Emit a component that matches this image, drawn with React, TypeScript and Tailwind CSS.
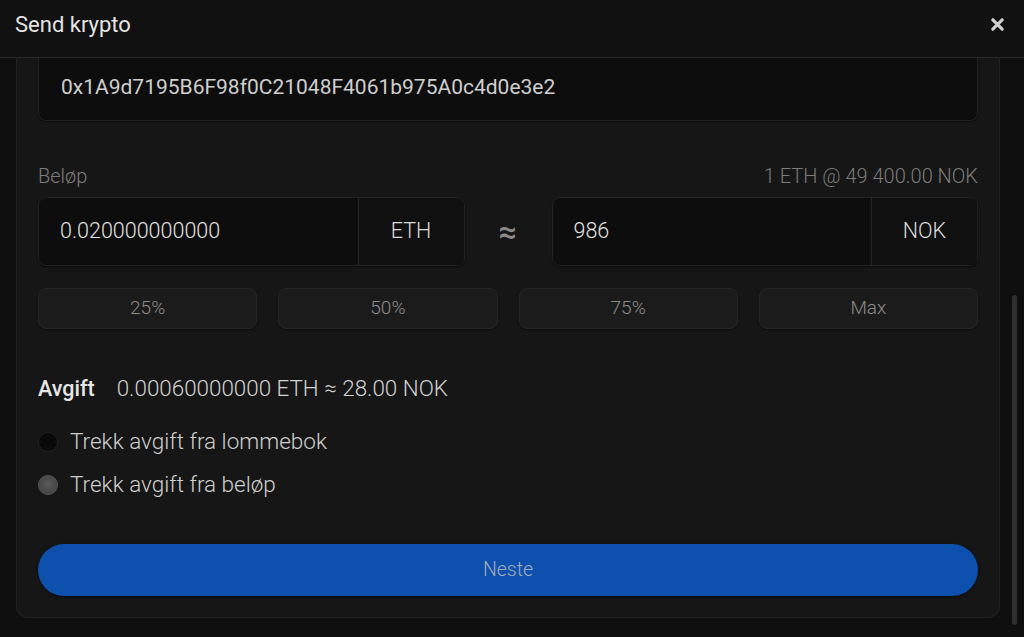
const font = { fontFamily: "Roboto, 'Noto Sans', sans-serif" };

function Radio({ checked, label }: { checked: boolean; label: string }) {
  return (
    <label className="flex h-[24px] items-center gap-3">
      <span
        className={[
          "h-[20px] w-[20px] shrink-0 rounded-full border",
          checked
            ? "border-[#555] bg-[radial-gradient(circle_at_50%_45%,#5a5a5a,#3c3c3c)]"
            : "border-[#222] bg-[#090909]",
        ].join(" ")}
      />
      <span className="text-[22.5px] font-light text-[#cfcfcf]">{label}</span>
    </label>
  );
}

function AmountInput({ value, unit }: { value: string; unit: string }) {
  return (
    <div className="flex h-[69px] overflow-hidden rounded-lg border border-[#222] bg-[#0d0d0d] shadow-[0_1px_2px_rgba(0,0,0,0.6)]">
      <div className="flex flex-1 items-center pl-[21px] text-[21.5px] font-light text-[#e2e2e2]">
        {value}
      </div>
      <div className="flex w-[106px] items-center justify-center border-l border-[#262626] bg-[#101010] text-[21.5px] font-light text-[#dcdcdc]">
        {unit}
      </div>
    </div>
  );
}

export default function App() {
  const percents = ["25%", "50%", "75%", "Max"];

  return (
    <div
      className="flex h-[637px] w-[1024px] flex-col overflow-hidden bg-[#0f0f0f]"
      style={font}
    >
      <header className="flex h-[58px] shrink-0 items-center justify-between border-b border-[#2a2a2a] bg-[#111111] pb-[8px] pl-[15px] pr-[19px]">
        <h1 className="text-[22px] text-[#e4e4e4]">Send krypto</h1>
        <svg viewBox="0 0 16 16" className="h-[15px] w-[15px]" aria-hidden="true">
          <path
            d="M3 3l10 10M13 3L3 13"
            stroke="#cfcfcf"
            strokeWidth="3.4"
            strokeLinecap="round"
          />
        </svg>
      </header>

      <div className="flex flex-1">
        <div className="w-[1000px] pl-[16px]">
          <div className="rounded-b-xl border-x border-b border-[#222] bg-[#161616] px-[21px] pb-[21px]">
            <div className="flex h-[63px] items-start rounded-b-lg border-x border-b border-[#222] bg-[#0d0d0d] pl-[22px] pt-[17px] text-[21px] leading-6 text-[#cfcfcf] shadow-[0_1px_2px_rgba(0,0,0,0.6)]">
              0x1A9d7195B6F98f0C21048F4061b975A0c4d0e3e2
            </div>

            <div className="mt-[43px] flex h-[24px] items-center justify-between text-[20px] font-light text-[#7c7c7c]">
              <span>Beløp</span>
              <span>1 ETH @ 49 400.00 NOK</span>
            </div>

            <div className="mt-[9px] grid grid-cols-[1fr_87px_1fr] items-center">
              <AmountInput value="0.020000000000" unit="ETH" />
              <div className="text-center text-[32px] font-medium leading-none text-[#8a8a8a]">≈</div>
              <AmountInput value="986" unit="NOK" />
            </div>

            <div className="mt-[22px] grid grid-cols-4 gap-[21px]">
              {percents.map((p) => (
                <button
                  key={p}
                  type="button"
                  className="h-[41px] rounded-lg border border-[#262626] bg-[#1b1b1b] text-[19px] font-light text-[#8c8c8c] shadow-[0_1px_2px_rgba(0,0,0,0.5)]"
                >
                  {p}
                </button>
              ))}
            </div>

            <div className="mt-[48px] flex h-[24px] items-center gap-[22px]">
              <span className="text-[21.5px] font-medium text-[#e6e6e6]">Avgift</span>
              <span className="text-[22.4px] font-light text-[#d2d2d2]">
                0.00060000000 ETH ≈ 28.00 NOK
              </span>
            </div>

            <div className="mt-[29px] flex flex-col gap-[19px]">
              <Radio checked={false} label="Trekk avgift fra lommebok" />
              <Radio checked label="Trekk avgift fra beløp" />
            </div>

            <button
              type="button"
              className="mt-[47px] h-[52px] w-full rounded-full bg-[#0e50ad] text-[19.5px] font-light text-[#a3acbb] shadow-[0_1px_3px_rgba(0,0,0,0.6)]"
            >
              Neste
            </button>
          </div>
        </div>

        <div className="flex-1 pl-[12px]">
          <div className="mt-[237px] h-[330px] w-[5px] rounded-sm bg-[#2f2f2f]" />
        </div>
      </div>
    </div>
  );
}
